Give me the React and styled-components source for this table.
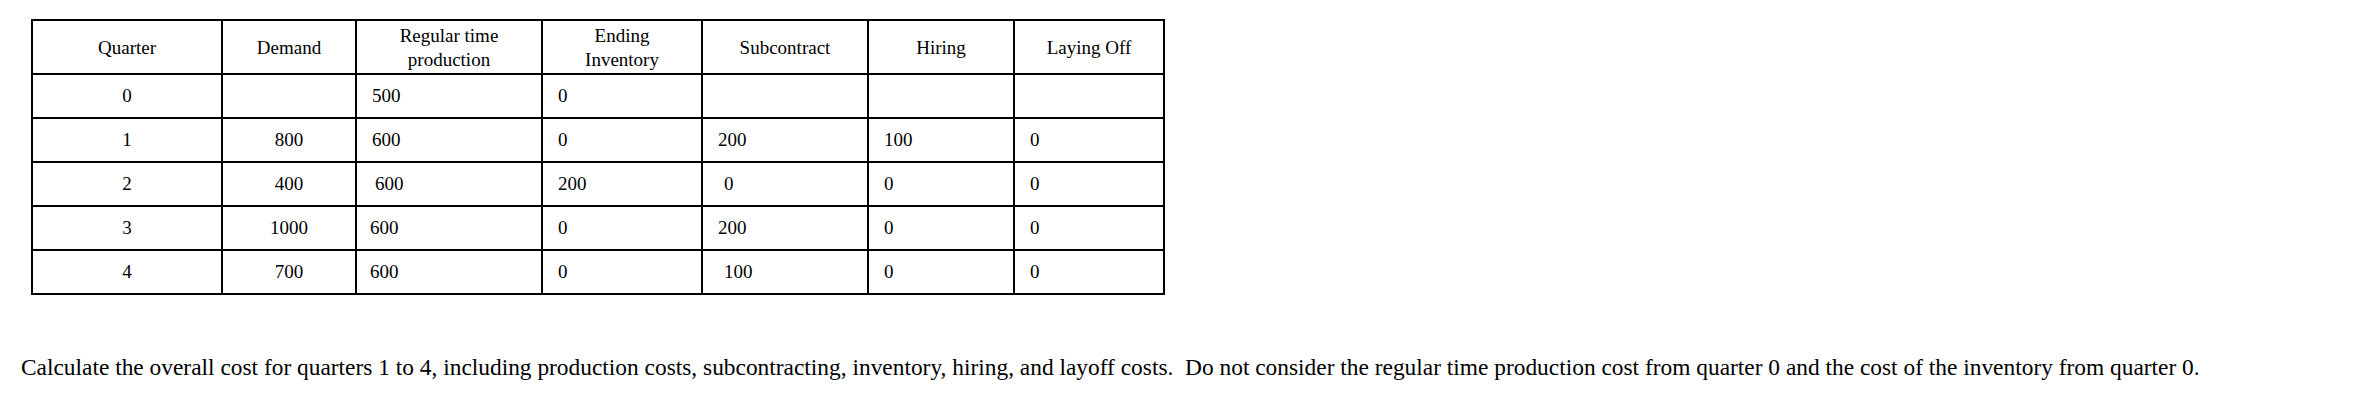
import React from "react";
import styled, { createGlobalStyle } from "styled-components";

const GlobalStyle = createGlobalStyle`
  html, body {
    margin: 0;
    padding: 0;
    background: #ffffff;
  }
  body, table, th, td {
    font-family: "Liberation Serif", "Times New Roman", serif;
    color: #000000;
  }
`;

const Page = styled.div`
  width: 2355px;
  height: 406px;
  padding: 19px 0 0 31px;
  box-sizing: border-box;
  display: flex;
  flex-direction: column;
`;

const Table = styled.table`
  border-collapse: collapse;
  table-layout: fixed;
  width: 1134px;
  font-family: "Liberation Serif", "Times New Roman", serif;
  font-size: 19px;
`;

const HeadCell = styled.th`
  border: 2px solid #000;
  font-weight: normal;
  text-align: center;
  vertical-align: middle;
  line-height: 24px;
  padding: 2px 0 0;
  height: 50px;
`;

const Cell = styled.td`
  border: 2px solid #000;
  text-align: ${(p) => (p.$center ? "center" : "left")};
  padding: 0 0 0 ${(p) => (p.$center ? 0 : 15 + (p.$shift || 0))}px;
  height: 42px;
  vertical-align: middle;
  line-height: 22px;
`;

const Note = styled.p`
  margin: 59px 0 0 -10px;
  font-family: "Liberation Serif", "Times New Roman", serif;
  font-size: 23.4px;
  white-space: pre;
  line-height: 27px;
`;

const widths = [190, 134, 186, 160, 166, 146, 150];

const headers = [
  "Quarter",
  "Demand",
  "Regular time\nproduction",
  "Ending\nInventory",
  "Subcontract",
  "Hiring",
  "Laying Off",
];

// [value, extra left shift]
const rows = [
  ["0", "", ["500", 0], ["0", 0], ["", 0], ["", 0], ["", 0]],
  ["1", "800", ["600", 0], ["0", 0], ["200", 0], ["100", 0], ["0", 0]],
  ["2", "400", ["600", 3], ["200", 0], ["0", 6], ["0", 0], ["0", 0]],
  ["3", "1000", ["600", -2], ["0", 0], ["200", 0], ["0", 0], ["0", 0]],
  ["4", "700", ["600", -2], ["0", 0], ["100", 6], ["0", 0], ["0", 0]],
];

export default function App() {
  return (
    <Page>
      <GlobalStyle />
      <Table>
        <colgroup>
          {widths.map((w, i) => (
            <col key={i} style={{ width: w }} />
          ))}
        </colgroup>
        <thead>
          <tr>
            {headers.map((h) => (
              <HeadCell key={h}>
                {h.split("\n").map((line, i) => (
                  <div key={i}>{line}</div>
                ))}
              </HeadCell>
            ))}
          </tr>
        </thead>
        <tbody>
          {rows.map((r) => (
            <tr key={r[0]}>
              <Cell $center>{r[0]}</Cell>
              <Cell $center>{r[1]}</Cell>
              {r.slice(2).map(([v, s], i) => (
                <Cell key={i} $shift={s}>
                  {v}
                </Cell>
              ))}
            </tr>
          ))}
        </tbody>
      </Table>
      <Note>
        {"Calculate the overall cost for quarters 1 to 4, including production costs, subcontracting, inventory, hiring, and layoff costs.  Do not consider the regular time production cost from quarter 0 and the cost of the inventory from quarter 0."}
      </Note>
    </Page>
  );
}
